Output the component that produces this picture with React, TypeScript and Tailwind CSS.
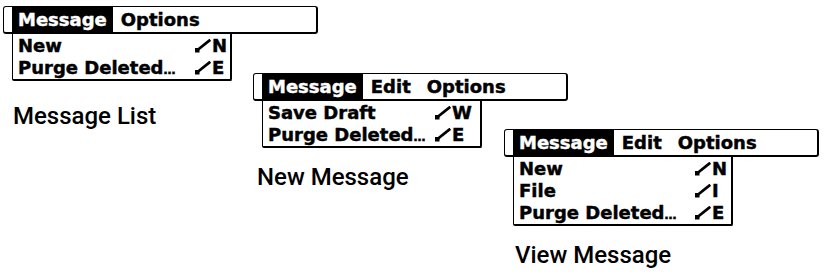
import React from "react";

type Item = { label: string; key: string; ellipsis?: boolean };

function Stroke() {
  return (
    <svg width="16" height="14" viewBox="0 0 16 14" className="mt-[4px] shrink-0">
      <rect x="0" y="9" width="4.5" height="4.5" fill="black" />
      <line x1="2.5" y1="11" x2="15.3" y2="0.8" stroke="black" strokeWidth="2.8" />
    </svg>
  );
}

function Menu({
  titles,
  items,
  scw,
}: {
  titles: string[];
  items: Item[];
  scw: string;
}) {
  return (
    <div className="font-['DejaVu_Sans',sans-serif] font-bold text-[18px] text-black [-webkit-text-stroke-width:0.45px]">
      <div className="flex h-[28px] w-[315px] bg-white border-t border-l border-r-2 border-b-2 border-black rounded-[3px] pl-[8px]">
        {titles.map((t, i) =>
          i === 0 ? (
            <div key={t} className="bg-black text-white px-[6px] leading-[25px]">
              {t}
            </div>
          ) : (
            <div key={t} className="px-[8px] leading-[25px]">
              {t}
            </div>
          )
        )}
      </div>
      <div className="ml-[9px] w-[220px] bg-white border-l border-r-2 border-b-2 border-black rounded-b-[2px] pt-[1px] pl-[5px] pr-[3px] grid grid-cols-[1fr_auto]">
        {items.map((it) => (
          <React.Fragment key={it.label}>
            <div className="h-[22px] leading-[22px] whitespace-nowrap">
              {it.label}
              {it.ellipsis ? <span className="text-[12px]">…</span> : null}
            </div>
            <div className={`h-[22px] flex items-start ${scw}`}>
              <Stroke />
              <span className="ml-[1px] leading-[22px]">{it.key}</span>
            </div>
          </React.Fragment>
        ))}
      </div>
    </div>
  );
}

export default function App() {
  return (
    <div className="w-[829px] h-[276px] bg-white overflow-hidden flex items-start">
      <div className="ml-[3px] mt-[6px] w-[250px] shrink-0">
        <Menu
          titles={["Message", "Options"]}
          items={[
            { label: "New", key: "N" },
            { label: "Purge Deleted", key: "E", ellipsis: true },
          ]}
          scw="w-[32px]"
        />
        <div className="mt-[21px] ml-[10px] font-['Roboto',sans-serif] font-medium text-[24px] leading-[28px] text-black whitespace-nowrap">
          Message List
        </div>
      </div>
      <div className="mt-[73px] w-[251px] shrink-0">
        <Menu
          titles={["Message", "Edit", "Options"]}
          items={[
            { label: "Save Draft", key: "W" },
            { label: "Purge Deleted", key: "E", ellipsis: true },
          ]}
          scw="w-[42px]"
        />
        <div className="mt-[15px] ml-[4px] font-['Roboto',sans-serif] font-medium text-[24px] leading-[28px] text-black whitespace-nowrap">
          New Message
        </div>
      </div>
      <div className="mt-[129px] w-[320px] shrink-0">
        <Menu
          titles={["Message", "Edit", "Options"]}
          items={[
            { label: "New", key: "N" },
            { label: "File", key: "I" },
            { label: "Purge Deleted", key: "E", ellipsis: true },
          ]}
          scw="w-[33px]"
        />
        <div className="mt-[15px] ml-[11px] font-['Roboto',sans-serif] font-medium text-[24px] leading-[28px] text-black whitespace-nowrap">
          View Message
        </div>
      </div>
    </div>
  );
}
